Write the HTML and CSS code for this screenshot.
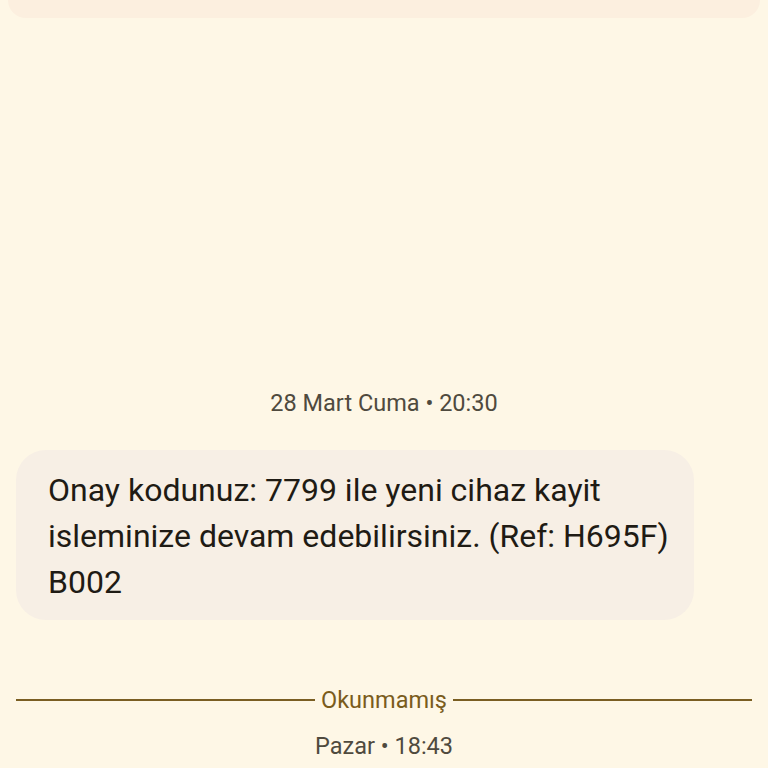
FILE: index.html
```html
<!DOCTYPE html>
<html lang="tr">
<head>
<meta charset="utf-8">
<link rel="stylesheet" href="styles.css">
</head>
<body>
<div class="screen">
  <div class="top-card"></div>
  <div class="stamp date">28 Mart Cuma • 20:30</div>
  <div class="bubble">Onay kodunuz: 7799 ile yeni cihaz kayit isleminize devam edebilirsiniz. (Ref: H695F) B002</div>
  <div class="divider"><span class="line"></span><span class="label">Okunmamış</span><span class="line"></span></div>
  <div class="stamp last">Pazar • 18:43</div>
</div>
</body>
</html>
```

FILE: styles.css
```css
html, body {
  margin: 0;
  padding: 0;
  background: #fef7e6;
}
.screen {
  width: 768px;
  height: 768px;
  overflow: hidden;
  display: flex;
  flex-direction: column;
  font-family: Roboto, "Noto Sans", sans-serif;
}
.top-card {
  height: 18px;
  margin: 0 8px;
  background: #fcefdf;
  border-radius: 0 0 24px 24px;
}
.stamp {
  font-size: 23.5px;
  line-height: 28px;
  color: #4f4a3e;
  text-align: center;
}
.date {
  margin-top: 371px;
}
.bubble {
  margin: 33px 0 0 16px;
  width: 678px;
  box-sizing: border-box;
  padding: 17px 20px 15px 32px;
  background: #f7efe5;
  border-radius: 30px;
  font-size: 32px;
  line-height: 46px;
  color: #1f1b14;
}
.divider {
  margin: 66px 16px 0 16px;
  display: flex;
  align-items: center;
  gap: 6px;
}
.line {
  flex: 1;
  height: 2px;
  background: #7a5e22;
}
.label {
  font-size: 23.5px;
  line-height: 28px;
  color: #7a5c1c;
}
.last {
  margin-top: 18px;
}
```
